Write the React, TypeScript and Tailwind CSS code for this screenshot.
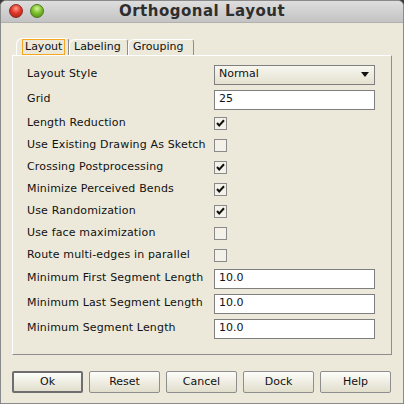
import React from "react";

const font = { fontFamily: '"DejaVu Sans", Verdana, sans-serif' };

function Check({ on }: { on: boolean }) {
  return (
    <div className="w-[13px] h-[13px] border border-[#8a8a8a] bg-[#f4f2e8] flex items-center justify-center">
      {on && (
        <svg width="9" height="8" viewBox="0 0 9 8">
          <path d="M1 4 L3.2 6.4 L8 1.2" fill="none" stroke="#111" strokeWidth="2" />
        </svg>
      )}
    </div>
  );
}

function Field({ value }: { value: string }) {
  return (
    <div className="w-[161px] h-[20px] border border-[#7f7f7f] bg-white flex items-center pl-[4px] text-[11px] text-[#111]">
      {value}
    </div>
  );
}

function Combo({ value }: { value: string }) {
  return (
    <div className="w-[161px] h-[20px] border border-[#7f7f7f] bg-gradient-to-b from-[#f8f7f0] to-[#e4e1d0] flex items-center justify-between pl-[4px] pr-[5px] text-[11px] text-[#111]">
      <span>{value}</span>
      <svg width="8" height="5" viewBox="0 0 8 5">
        <path d="M0 0 H8 L4 5 Z" fill="#111" />
      </svg>
    </div>
  );
}

type Row = { label: string; kind: "combo" | "field" | "check"; value?: string; on?: boolean };

const rows: Row[] = [
  { label: "Layout Style", kind: "combo", value: "Normal" },
  { label: "Grid", kind: "field", value: "25" },
  { label: "Length Reduction", kind: "check", on: true },
  { label: "Use Existing Drawing As Sketch", kind: "check", on: false },
  { label: "Crossing Postprocessing", kind: "check", on: true },
  { label: "Minimize Perceived Bends", kind: "check", on: true },
  { label: "Use Randomization", kind: "check", on: true },
  { label: "Use face maximization", kind: "check", on: false },
  { label: "Route multi-edges in parallel", kind: "check", on: false },
  { label: "Minimum First Segment Length", kind: "field", value: "10.0" },
  { label: "Minimum Last Segment Length", kind: "field", value: "10.0" },
  { label: "Minimum Segment Length", kind: "field", value: "10.0" },
];

function Button({ label, primary }: { label: string; primary?: boolean }) {
  return (
    <div
      className={
        "w-[71px] h-[22px] rounded-[2px] flex items-center justify-center text-[11px] text-[#111] bg-gradient-to-b from-[#fdfdfa] to-[#e1decc] " +
        (primary ? "border-2 border-[#6e6e6e]" : "border border-[#8e8e8e]")
      }
    >
      {label}
    </div>
  );
}

export default function App() {
  return (
    <div style={font} className="w-[404px] h-[404px] bg-[#3c3b37] overflow-hidden">
      <div className="w-[404px] h-[404px] flex flex-col rounded-t-[6px] overflow-hidden border border-[#8a8a8a] bg-[#ece9da]">
        {/* title bar */}
        <div className="h-[22px] shrink-0 relative flex items-center justify-center bg-gradient-to-b from-[#dedede] to-[#c3c3c3] border-b border-[#b0b0b0]">
          <div className="absolute left-[8px] top-[3px] flex gap-[7px]">
            <div className="w-[14px] h-[14px] rounded-full border border-[#8a2a22] bg-[radial-gradient(circle_at_50%_30%,#ff9a8a_0%,#e2382a_45%,#a51c12_100%)]" />
            <div className="w-[14px] h-[14px] rounded-full border border-[#4d7a1c] bg-[radial-gradient(circle_at_50%_30%,#d6f59a_0%,#7fc12e_45%,#4b8514_100%)]" />
          </div>
          <span className="text-[15px] font-bold tracking-[0.5px] text-[#2e2e2e]">Orthogonal Layout</span>
        </div>

        {/* body */}
        <div className="flex-1 flex flex-col pl-[11px] pr-[11px] pt-[15px]">
          {/* tabs */}
          <div className="flex h-[17px] pl-[4px] text-[11px] text-[#111]">
            <div className="w-[53px] h-[17px] border-t border-l border-white border-r border-r-[#8e8e8e] rounded-tl-[6px] rounded-tr-[3px] flex items-end pl-[5px] bg-[#ece9da]">
              <span className="border border-[#f5a623] px-[2px] h-[16px] leading-[14px]">Layout</span>
            </div>
            <div className="w-[59px] h-[16px] mt-[1px] border-t border-l border-white border-r border-r-[#8e8e8e] rounded-tl-[6px] rounded-tr-[3px] flex items-center pl-[4px]">
              Labeling
            </div>
            <div className="w-[66px] h-[16px] mt-[1px] border-t border-l border-white border-r border-r-[#8e8e8e] rounded-tl-[6px] rounded-tr-[3px] flex items-center pl-[4px]">
              Grouping
            </div>
          </div>

          {/* panel */}
          <div className="w-[380px] h-[300px] border-t border-l border-white border-r border-b border-r-[#8e8e8e] border-b-[#8e8e8e] pt-[6px] pl-[14px] text-[11px] text-[#111]">
            {rows.map((r) => (
              <div
                key={r.label}
                className={"flex items-center " + (r.kind === "check" ? "h-[22px]" : "h-[25px]")}
              >
                <div className="w-[187px] whitespace-nowrap tracking-[0.15px]">{r.label}</div>
                {r.kind === "combo" && <Combo value={r.value!} />}
                {r.kind === "field" && <Field value={r.value!} />}
                {r.kind === "check" && <Check on={!!r.on} />}
              </div>
            ))}
          </div>

          {/* buttons */}
          <div className="flex gap-[6px] mt-[16px]">
            <Button label="Ok" primary />
            <Button label="Reset" />
            <Button label="Cancel" />
            <Button label="Dock" />
            <Button label="Help" />
          </div>
        </div>
      </div>
    </div>
  );
}
